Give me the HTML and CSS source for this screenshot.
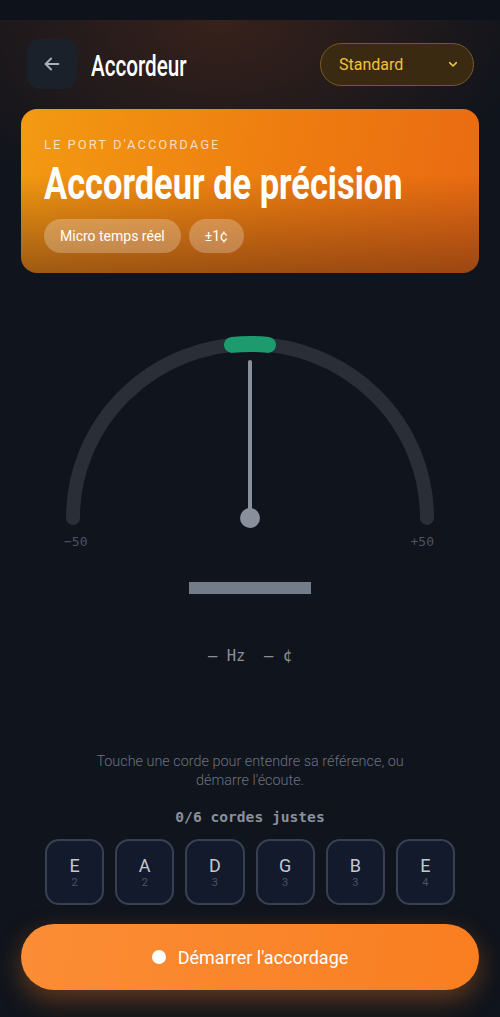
FILE: index.html
```html
<!DOCTYPE html>
<html lang="fr">
<head>
  <meta charset="UTF-8" />
  <title>Accordeur</title>
  <link rel="stylesheet" href="styles.css">
</head>
<body>
  <div class="statusbar"></div>

  <main class="app">
    <!-- Top bar -->
    <header class="topbar">
      <button class="back" aria-label="Retour">
        <svg viewBox="0 0 24 24">
          <line x1="19" y1="12" x2="5" y2="12" />
          <polyline points="11 6 5 12 11 18" />
        </svg>
      </button>
      <h1 class="title"><span class="narrow">Accordeur</span></h1>
      <button class="tuning">
        <span>Standard</span>
        <svg viewBox="0 0 24 24">
          <polyline points="7 10 12 15 17 10" />
        </svg>
      </button>
    </header>

    <!-- Hero card -->
    <section class="hero">
      <div class="eyebrow">LE PORT D'ACCORDAGE</div>
      <h2 class="hero-title"><span class="narrow">Accordeur de précision</span></h2>
      <div class="chips">
        <span class="chip">Micro temps réel</span>
        <span class="chip">±1¢</span>
      </div>
    </section>

    <!-- Gauge -->
    <section class="gauge">
      <svg viewBox="0 0 500 250" width="500" height="250">
        <path class="track" d="M73 218 A177 174 0 0 1 427 218" />
        <path class="zone" d="M232 44.9 A177 174 0 0 1 268 44.9" />
        <line class="needle" x1="250" y1="62" x2="250" y2="218" />
        <circle class="pivot" cx="250" cy="218" r="10" />
        <text class="scale" x="64" y="246">−50</text>
        <text class="scale" x="434" y="246" text-anchor="end">+50</text>
      </svg>
    </section>

    <div class="note-bar"></div>

    <div class="readout">— Hz &nbsp;— ¢</div>

    <p class="hint">Touche une corde pour entendre sa référence, ou démarre l'écoute.</p>

    <div class="count">0/6 cordes justes</div>

    <div class="strings">
      <button class="string"><span class="note">E</span><span class="oct">2</span></button>
      <button class="string"><span class="note">A</span><span class="oct">2</span></button>
      <button class="string"><span class="note">D</span><span class="oct">3</span></button>
      <button class="string"><span class="note">G</span><span class="oct">3</span></button>
      <button class="string"><span class="note">B</span><span class="oct">3</span></button>
      <button class="string"><span class="note">E</span><span class="oct">4</span></button>
    </div>

    <button class="start">
      <span class="dot"></span>
      Démarrer l'accordage
    </button>
  </main>
</body>
</html>
```

FILE: styles.css
```css
/* Dark tuner theme */
body {
  margin: 0;
  background-color: #10141c;
  color: #fff;
  font-family: Roboto, "Noto Sans", sans-serif;
}

button {
  font-family: inherit;
  cursor: pointer;
}

.statusbar {
  height: 20px;
  background: #0e121b;
}

.app {
  padding: 0 21px 26px;
  background:
    radial-gradient(ellipse 440px 280px at 220px 0, rgba(120, 55, 25, 0.38), transparent 72%),
    #10141c;
  min-height: 997px;
  box-sizing: border-box;
}

/* condensed display face, squeezed from Roboto */
.narrow {
  display: inline-block;
  white-space: nowrap;
  transform-origin: left center;
}

/* Top bar */
.topbar {
  display: flex;
  align-items: center;
  padding-top: 19px;
  height: 50px;
}

.back {
  width: 50px;
  height: 50px;
  margin-left: 6px;
  border: none;
  border-radius: 13px;
  background: #1a212b;
  display: flex;
  align-items: center;
  justify-content: center;
  padding: 0;
}

.back svg {
  width: 22px;
  height: 22px;
  stroke: #aab0bb;
  stroke-width: 2;
  stroke-linecap: round;
  stroke-linejoin: round;
  fill: none;
}

.title {
  margin: 4px 0 0 14px;
  font-weight: 500;
  font-size: 29.5px;
  line-height: 36px;
  flex: 1;
}

.title .narrow {
  transform: scaleX(0.7);
}

.tuning {
  width: 154px;
  height: 43px;
  margin-right: 5px;
  border: 1px solid #7a5a22;
  border-radius: 22px;
  background: #3a2a12;
  color: #f2c23c;
  font-size: 16px;
  display: flex;
  align-items: center;
  justify-content: space-between;
  padding: 0 12px 0 18px;
}

.tuning svg {
  width: 16px;
  height: 16px;
  stroke: #f2c23c;
  stroke-width: 2.4;
  stroke-linecap: round;
  stroke-linejoin: round;
  fill: none;
}

/* Hero card */
.hero {
  margin-top: 20px;
  height: 164px;
  box-sizing: border-box;
  border-radius: 16px;
  padding: 28px 23px 0;
  background:
    linear-gradient(180deg, rgba(0, 0, 0, 0) 40%, rgba(90, 40, 20, 0.55) 100%),
    linear-gradient(100deg, #f39a12 0%, #ee7d10 55%, #ea6a12 100%);
}

.eyebrow {
  font-size: 13px;
  line-height: 16px;
  letter-spacing: 2px;
  color: rgba(255, 255, 255, 0.72);
}

.hero-title {
  margin: 6px 0 0;
  font-weight: bold;
  font-size: 45px;
  line-height: 50px;
}

.hero-title .narrow {
  transform: scaleX(0.765);
}

.chips {
  display: flex;
  gap: 8px;
  margin-top: 10px;
}

.chip {
  height: 34px;
  line-height: 34px;
  padding: 0 16px;
  border-radius: 17px;
  background: rgba(255, 255, 255, 0.25);
  font-size: 14px;
}

/* Gauge */
.gauge {
  margin: 27px -21px 0;
  height: 250px;
}

.gauge svg {
  display: block;
}

.track {
  fill: none;
  stroke: #292e37;
  stroke-width: 14;
  stroke-linecap: round;
}

.zone {
  fill: none;
  stroke: #1e9b6e;
  stroke-width: 16;
  stroke-linecap: round;
}

.needle {
  stroke: #8a909b;
  stroke-width: 4;
  stroke-linecap: round;
}

.pivot {
  fill: #8a909b;
}

.scale {
  fill: #4b5361;
  font-family: "DejaVu Sans Mono", monospace;
  font-size: 13px;
}

.note-bar {
  width: 122px;
  height: 12px;
  margin: 32px auto 0;
  background: #737c89;
}

.readout {
  margin-top: 52px;
  text-align: center;
  font-family: "DejaVu Sans Mono", monospace;
  font-size: 15.5px;
  line-height: 20px;
  color: #8a909b;
}

.hint {
  margin: 86px auto 0;
  width: 340px;
  text-align: center;
  font-size: 14.4px;
  line-height: 19px;
  font-weight: 300;
  color: #6b7280;
}

.count {
  margin-top: 17px;
  text-align: center;
  font-family: "DejaVu Sans Mono", monospace;
  font-weight: bold;
  font-size: 14.6px;
  line-height: 20px;
  color: #8a909b;
}

/* Strings */
.strings {
  display: grid;
  grid-template-columns: repeat(6, 1fr);
  gap: 11px;
  padding: 0 24px;
  margin-top: 12px;
}

.string {
  height: 66px;
  border: 2px solid #384152;
  border-radius: 14px;
  background: #121a2c;
  display: flex;
  flex-direction: column;
  align-items: center;
  justify-content: center;
  padding: 0;
}

.note {
  font-size: 18px;
  line-height: 21px;
  color: #c3c8d1;
}

.oct {
  font-size: 11px;
  line-height: 14px;
  color: #4b5361;
}

/* Start button */
.start {
  margin-top: 19px;
  width: 100%;
  height: 66px;
  border: none;
  border-radius: 33px;
  background: linear-gradient(100deg, #fb8d36 0%, #f97e20 100%);
  box-shadow: 0 10px 26px rgba(249, 126, 32, 0.35);
  color: #fff;
  font-size: 18px;
  display: flex;
  align-items: center;
  justify-content: center;
  gap: 12px;
}

.dot {
  width: 14px;
  height: 14px;
  border-radius: 50%;
  background: #fff;
}
```
